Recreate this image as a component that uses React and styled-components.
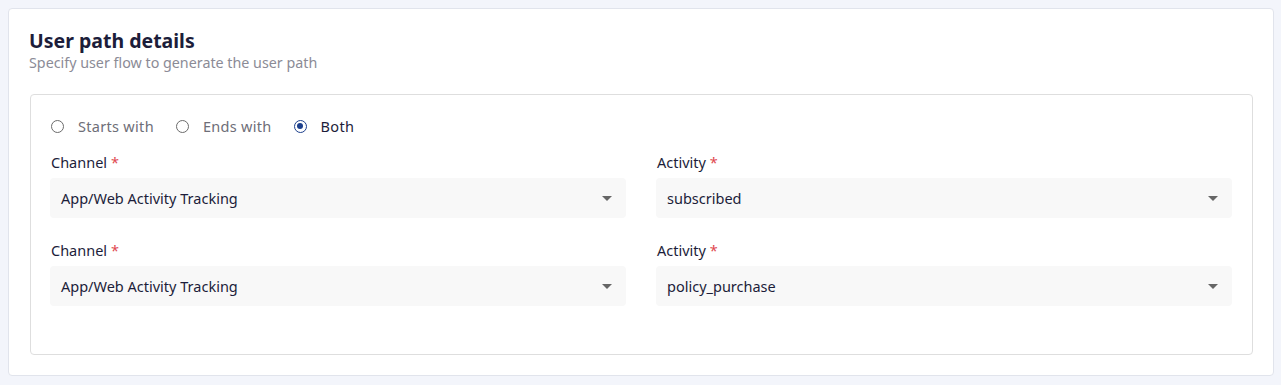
import React, { useState } from "react";
import styled, { createGlobalStyle } from "styled-components";

const GlobalStyle = createGlobalStyle`
  body {
    margin: 0;
    background: #f3f5fb;
    font-family: "Noto Sans", "Open Sans", sans-serif;
  }
`;

const rows = [
  { channel: "App/Web Activity Tracking", activity: "subscribed" },
  { channel: "App/Web Activity Tracking", activity: "policy_purchase" },
];

const App = () => {
  const [mode, setMode] = useState("both");
  return (
    <>
      <GlobalStyle />
      <Page>
        <Card>
          <Title>User path details</Title>
          <Subtitle>Specify user flow to generate the user path</Subtitle>
          <Box>
            <RadioRow>
              {[
                ["starts", "Starts with"],
                ["ends", "Ends with"],
                ["both", "Both"],
              ].map(([key, label]) => (
                <RadioLabel key={key} active={mode === key} onClick={() => setMode(key)}>
                  <RadioDot active={mode === key} />
                  {label}
                </RadioLabel>
              ))}
            </RadioRow>
            {rows.map((row, i) => (
              <FieldRow key={i}>
                <Field>
                  <Label>
                    Channel <Star>*</Star>
                  </Label>
                  <Select>
                    {row.channel}
                    <Caret />
                  </Select>
                </Field>
                <Field>
                  <Label>
                    Activity <Star>*</Star>
                  </Label>
                  <Select>
                    {row.activity}
                    <Caret />
                  </Select>
                </Field>
              </FieldRow>
            ))}
          </Box>
        </Card>
      </Page>
    </>
  );
};

const Page = styled.div`
  padding: 8px 7px 9px 8px;
`;

const Card = styled.div`
  background: #fff;
  border: 1px solid #e1e4ec;
  border-radius: 4px;
  padding: 20px;
`;

const Title = styled.h1`
  margin: 0;
  font-size: 19.5px;
  font-weight: 700;
  color: #1c1d3a;
  line-height: 24px;
`;

const Subtitle = styled.p`
  margin: 0;
  font-size: 14.3px;
  color: #8b8b96;
  line-height: 19px;
`;

const Box = styled.div`
  margin: 22px 0 0 1px;
  border: 1px solid #dedede;
  border-radius: 4px;
  padding: 18px 20px 48px 19px;
`;

const RadioRow = styled.div`
  display: flex;
  gap: 22px;
  padding-left: 1px;
  margin-bottom: 14px;
`;

const RadioLabel = styled.label`
  display: flex;
  align-items: center;
  gap: 14px;
  font-size: 14.5px;
  letter-spacing: 0.3px;
  line-height: 26px;
  color: ${(p) => (p.active ? "#1c1d3a" : "#6e6e78")};
  cursor: pointer;
`;

const RadioDot = styled.span`
  width: 11px;
  height: 11px;
  border-radius: 50%;
  border: 1px solid ${(p) => (p.active ? "#1c3f8c" : "#6b6b6b")};
  display: flex;
  align-items: center;
  justify-content: center;
  &::after {
    content: "";
    width: 6px;
    height: 6px;
    border-radius: 50%;
    background: #1c3f8c;
    display: ${(p) => (p.active ? "block" : "none")};
  }
`;

const FieldRow = styled.div`
  display: grid;
  grid-template-columns: 1fr 1fr;
  column-gap: 30px;
  & + & {
    margin-top: 23px;
  }
`;

const Field = styled.div`
  display: flex;
  flex-direction: column;
  gap: 7px;
`;

const Label = styled.div`
  font-size: 14.5px;
  line-height: 18px;
  color: #1c1d3a;
  padding-left: 1px;
`;

const Star = styled.span`
  color: #e0474f;
`;

const Select = styled.div`
  height: 40px;
  background: #f8f8f8;
  border-radius: 4px;
  display: flex;
  align-items: center;
  justify-content: space-between;
  padding: 0 14px 0 11px;
  font-size: 14.5px;
  color: #1c1d3a;
`;

const Caret = styled.span`
  width: 0;
  height: 0;
  border-left: 5px solid transparent;
  border-right: 5px solid transparent;
  border-top: 5px solid #666;
`;

export default App;
